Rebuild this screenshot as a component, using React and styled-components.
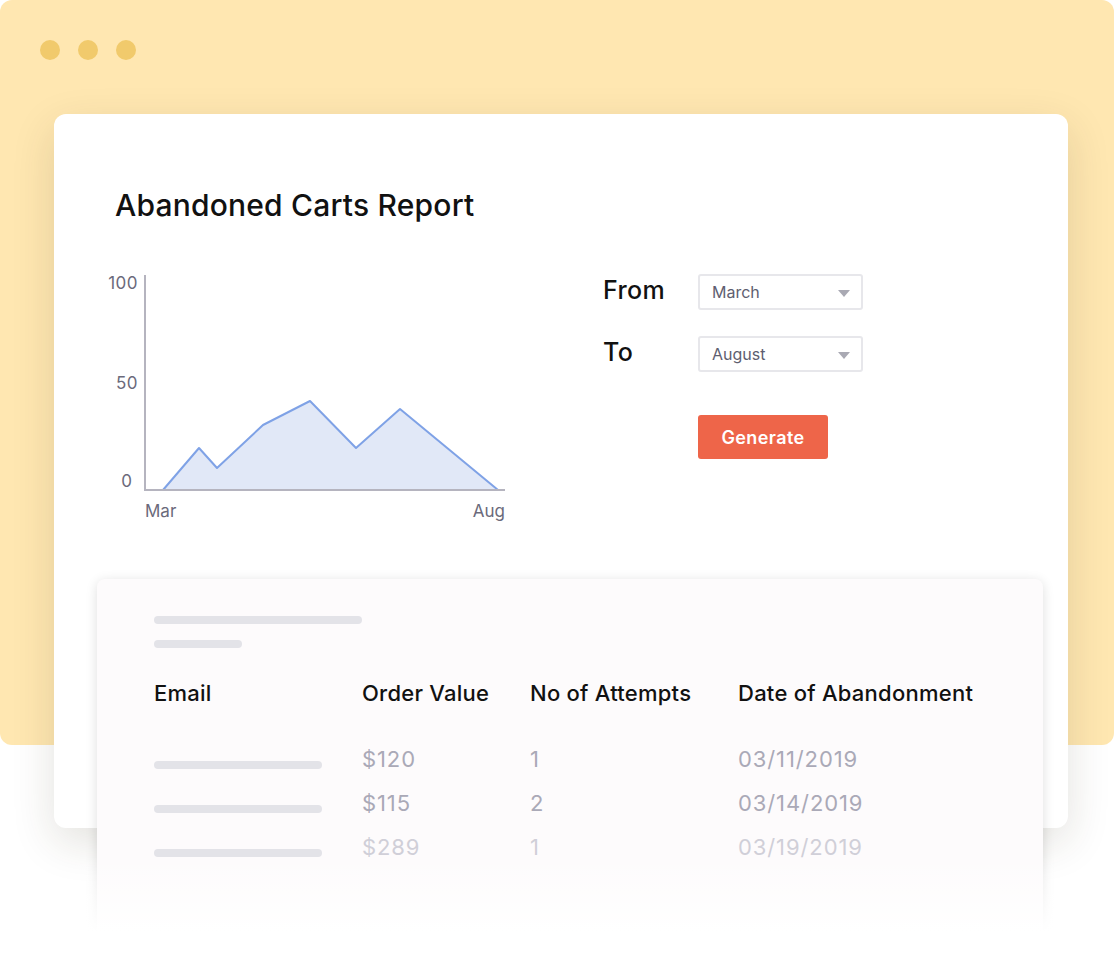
import React from 'react'
import styled, { createGlobalStyle } from 'styled-components'

const GlobalStyle = createGlobalStyle`
    html, body {
        margin: 0;
        padding: 0;
        background: #ffffff;
    }
    body {
        font-family: Inter, Lato, sans-serif;
        overflow: hidden;
    }
`

const Stage = styled.div`
    position: relative;
    width: 1114px;
    height: 960px;
    overflow: hidden;
    &::before {
        content: '';
        position: absolute;
        left: 0;
        top: 0;
        width: 1114px;
        height: 745px;
        border-radius: 12px;
        background: #ffe7b1;
    }
    &::after {
        content: '';
        position: absolute;
        left: 0;
        right: 0;
        top: 856px;
        bottom: 0;
        background: linear-gradient(to bottom, rgba(255, 255, 255, 0) 0, #ffffff 76px);
        z-index: 5;
    }
`

const Dots = styled.div`
    position: relative;
    display: flex;
    gap: 18px;
    padding: 40px 0 0 40px;
`

const Dot = styled.span`
    width: 20px;
    height: 20px;
    border-radius: 50%;
    background: #f1ca6c;
`

const Card = styled.section`
    position: relative;
    width: 1014px;
    height: 714px;
    box-sizing: border-box;
    margin: 54px 0 0 54px;
    padding: 70px 0 0 61px;
    background: #ffffff;
    border-radius: 12px;
    box-shadow: 0 14px 44px rgba(60, 50, 20, 0.14);
`

const Title = styled.h1`
    margin: 0;
    font: 500 30px/42px Inter, sans-serif;
    color: #111111;
    letter-spacing: 0.2px;
`

const Body = styled.div`
    display: flex;
    align-items: flex-start;
    margin-top: 40px;
`

const ChartSvg = styled.svg`
    display: block;
    margin-left: -15px;
    flex: none;
`

const Form = styled.div`
    display: grid;
    grid-template-columns: 95px 165px;
    row-gap: 26px;
    align-items: center;
    margin: 8px 0 0 93px;
`

const Label = styled.span`
    font: 500 25px Inter, sans-serif;
    color: #111111;
    letter-spacing: 0.4px;
    margin-top: -4px;
`

const Select = styled.div`
    position: relative;
    height: 36px;
    box-sizing: border-box;
    border: 2px solid #e7e7eb;
    border-radius: 3px;
    padding-left: 12px;
    display: flex;
    align-items: center;
    font: 400 16px Inter, sans-serif;
    color: #5e5e70;
    &::after {
        content: '';
        position: absolute;
        right: 11px;
        top: 14px;
        border-left: 6px solid transparent;
        border-right: 6px solid transparent;
        border-top: 7px solid #a9a9b3;
    }
`

const Button = styled.button`
    grid-column: 2;
    justify-self: start;
    width: 130px;
    height: 44px;
    margin-top: 17px;
    border: none;
    border-radius: 3px;
    background: #ee6549;
    color: #ffffff;
    font: 600 18px Inter, sans-serif;
    letter-spacing: 0.4px;
`

const TableCard = styled.section`
    position: relative;
    z-index: 2;
    width: 946px;
    height: 380px;
    box-sizing: border-box;
    margin: -249px 0 0 97px;
    padding: 37px 0 0 57px;
    background: #fdfbfc;
    border-radius: 8px 8px 0 0;
    box-shadow: 0 2px 12px rgba(0, 0, 0, 0.13);
`

const Skeleton = styled.div`
    width: ${({ w }) => w}px;
    height: 8px;
    border-radius: 4px;
    background: #e3e3e8;
    margin-bottom: ${({ mb }) => mb || 0}px;
`

const Grid = styled.div`
    display: grid;
    grid-template-columns: 208px 168px 208px 1fr;
    margin-top: 32px;
`

const Head = styled.div`
    font: 500 22px/26px Inter, sans-serif;
    color: #111111;
    letter-spacing: 0.25px;
    margin-bottom: 31px;
`

const Cell = styled.div`
    height: 44px;
    display: flex;
    align-items: center;
    font: 400 22px Inter, sans-serif;
    letter-spacing: 0.9px;
    color: ${({ faded }) => (faded ? '#d0cfd8' : '#aaa9b7')};
`

const rows = [
    { value: '$120', attempts: '1', date: '03/11/2019' },
    { value: '$115', attempts: '2', date: '03/14/2019' },
    { value: '$289', attempts: '1', date: '03/19/2019', faded: true },
]

// chart coords are page coords minus (100, 265)
const pts = [[63, 224], [99, 182], [117, 202], [163, 159], [210, 135], [256, 182], [300, 143], [398, 224]]
const line = pts.map((p) => p.join(',')).join(' ')

const Chart = () => (
    <ChartSvg width="410" height="260" viewBox="0 0 410 260">
        <polygon points={`${line}`} fill="#e1e8f7" />
        <polyline points={line} fill="none" stroke="#7fa2e6" strokeWidth="2" strokeLinejoin="round" />
        <line x1="45" y1="9" x2="45" y2="225" stroke="#b5b4bf" strokeWidth="2" />
        <line x1="44" y1="224" x2="405" y2="224" stroke="#b5b4bf" strokeWidth="2" />
        <g fill="#6b6a7b" fontFamily="Inter, sans-serif" fontSize="17">
            <text x="38" y="23" textAnchor="end" letterSpacing="0.5">100</text>
            <text x="38" y="123" textAnchor="end" letterSpacing="0.5">50</text>
            <text x="32" y="221" textAnchor="end">0</text>
            <text x="45" y="251">Mar</text>
            <text x="405" y="251" textAnchor="end">Aug</text>
        </g>
    </ChartSvg>
)

export default function App() {
    return (
        <Stage>
            <GlobalStyle />
            <Dots>
                <Dot />
                <Dot />
                <Dot />
            </Dots>
            <Card>
                <Title>Abandoned Carts Report</Title>
                <Body>
                    <Chart />
                    <Form>
                        <Label>From</Label>
                        <Select>March</Select>
                        <Label>To</Label>
                        <Select>August</Select>
                        <Button>Generate</Button>
                    </Form>
                </Body>
            </Card>
            <TableCard>
                <Skeleton w={208} mb={16} />
                <Skeleton w={88} />
                <Grid>
                    <Head>Email</Head>
                    <Head>Order Value</Head>
                    <Head>No of Attempts</Head>
                    <Head>Date of Abandonment</Head>
                    {rows.map((r) => (
                        <React.Fragment key={r.date}>
                            <Cell>
                                <Skeleton w={168} style={{ marginTop: 12 }} />
                            </Cell>
                            <Cell faded={r.faded}>{r.value}</Cell>
                            <Cell faded={r.faded}>{r.attempts}</Cell>
                            <Cell faded={r.faded}>{r.date}</Cell>
                        </React.Fragment>
                    ))}
                </Grid>
            </TableCard>
        </Stage>
    )
}
